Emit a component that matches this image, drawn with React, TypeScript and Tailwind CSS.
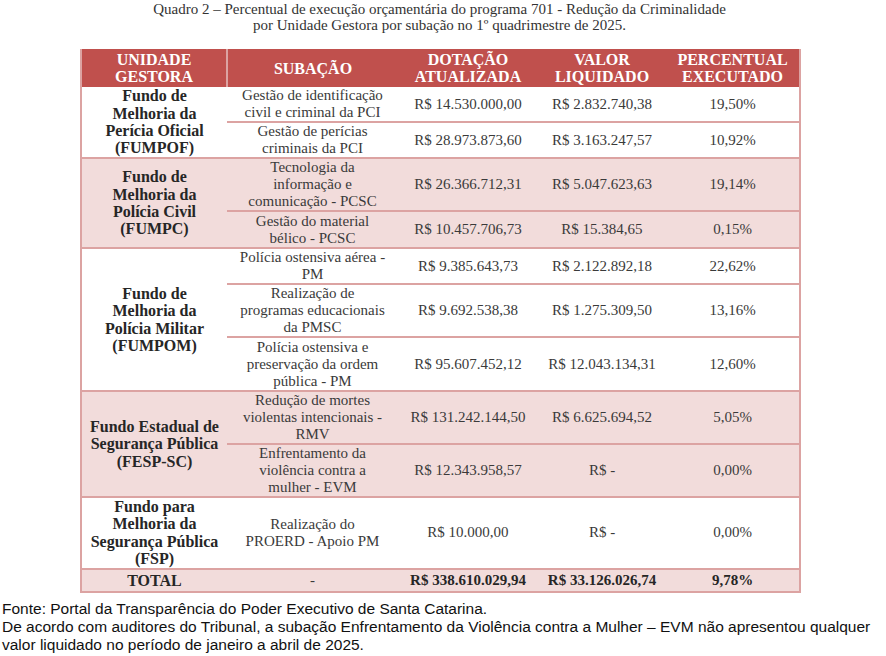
import React from 'react';

type Row = { sub: string[]; dot: string; liq: string; pct: string; h: string };
type Group = { name: string[]; shaded: boolean; rows: Row[] };

const groups: Group[] = [
  {
    name: ['Fundo de', 'Melhoria da', 'Perícia Oficial', '(FUMPOF)'],
    shaded: false,
    rows: [
      { sub: ['Gestão de identificação', 'civil e criminal da PCI'], dot: 'R$ 14.530.000,00', liq: 'R$ 2.832.740,38', pct: '19,50%', h: 'h-[34px]' },
      { sub: ['Gestão de perícias', 'criminais da PCI'], dot: 'R$ 28.973.873,60', liq: 'R$ 3.163.247,57', pct: '10,92%', h: 'h-[36px]' },
    ],
  },
  {
    name: ['Fundo de', 'Melhoria da', 'Polícia Civil', '(FUMPC)'],
    shaded: true,
    rows: [
      { sub: ['Tecnologia da', 'informação e', 'comunicação - PCSC'], dot: 'R$ 26.366.712,31', liq: 'R$ 5.047.623,63', pct: '19,14%', h: 'h-[53px]' },
      { sub: ['Gestão do material', 'bélico - PCSC'], dot: 'R$ 10.457.706,73', liq: 'R$ 15.384,65', pct: '0,15%', h: 'h-[37px]' },
    ],
  },
  {
    name: ['Fundo de', 'Melhoria da', 'Polícia Militar', '(FUMPOM)'],
    shaded: false,
    rows: [
      { sub: ['Polícia ostensiva aérea -', 'PM'], dot: 'R$ 9.385.643,73', liq: 'R$ 2.122.892,18', pct: '22,62%', h: 'h-[35px]' },
      { sub: ['Realização de', 'programas educacionais', 'da PMSC'], dot: 'R$ 9.692.538,38', liq: 'R$ 1.275.309,50', pct: '13,16%', h: 'h-[53px]' },
      { sub: ['Polícia ostensiva e', 'preservação da ordem', 'pública - PM'], dot: 'R$ 95.607.452,12', liq: 'R$ 12.043.134,31', pct: '12,60%', h: 'h-[54px]' },
    ],
  },
  {
    name: ['Fundo Estadual de', 'Segurança Pública', '(FESP-SC)'],
    shaded: true,
    rows: [
      { sub: ['Redução de mortes', 'violentas intencionais -', 'RMV'], dot: 'R$ 131.242.144,50', liq: 'R$ 6.625.694,52', pct: '5,05%', h: 'h-[53px]' },
      { sub: ['Enfrentamento da', 'violência contra a', 'mulher - EVM'], dot: 'R$ 12.343.958,57', liq: 'R$ -', pct: '0,00%', h: 'h-[53px]' },
    ],
  },
  {
    name: ['Fundo para', 'Melhoria da', 'Segurança Pública', '(FSP)'],
    shaded: false,
    rows: [
      { sub: ['Realização do', 'PROERD - Apoio PM'], dot: 'R$ 10.000,00', liq: 'R$ -', pct: '0,00%', h: 'h-[70px]' },
    ],
  },
];

const serif = "font-['Liberation_Serif',serif]";

export default function App() {
  return (
    <div className="w-[886px] h-[656px] bg-white overflow-hidden">
      {/* Title */}
      <div className={`${serif} text-[15px] leading-[16px] text-[#333] text-center w-[719px] ml-[80px] pt-[1px]`}>
        <p>Quadro 2 – Percentual de execução orçamentária do programa 701 - Redução da Criminalidade</p>
        <p>por Unidade Gestora por subação no 1º quadrimestre de 2025.</p>
      </div>

      {/* Table */}
      <table className={`${serif} ml-[80px] mt-[16px] w-[719px] border-collapse table-fixed text-[15px] leading-[17px] text-[#3a3a3a] text-center`}>
        <colgroup>
          <col className="w-[146px]" />
          <col className="w-[171px]" />
          <col className="w-[140px]" />
          <col className="w-[128px]" />
          <col className="w-[134px]" />
        </colgroup>
        <thead>
          <tr className="h-[38px] bg-[#c0504d] text-white text-[16px] leading-[17px]">
            <th className="border-x-2 border-[#dca3a2] font-bold">UNIDADE<br />GESTORA</th>
            <th className="font-bold">SUBAÇÃO</th>
            <th className="font-bold">DOTAÇÃO<br />ATUALIZADA</th>
            <th className="font-bold">VALOR<br />LIQUIDADO</th>
            <th className="border-r-2 border-[#dca3a2] font-bold">PERCENTUAL<br />EXECUTADO</th>
          </tr>
        </thead>
        <tbody>
          {groups.map((g) =>
            g.rows.map((r, i) => (
              <tr key={g.name[0] + g.name[2] + i} className={`${r.h} ${g.shaded ? 'bg-[#f2dcdb]' : 'bg-white'} border-b-2 border-[#dca3a2]`}>
                {i === 0 && (
                  <td rowSpan={g.rows.length} className="p-0 border-l-2 border-b-2 border-[#dca3a2] font-bold text-[16px] leading-[17.4px] text-[#262626] align-middle">
                    {g.name.map((l) => (
                      <div key={l}>{l}</div>
                    ))}
                  </td>
                )}
                <td className="align-middle">
                  {r.sub.map((l) => (
                    <div key={l}>{l}</div>
                  ))}
                </td>
                <td className="align-middle">{r.dot}</td>
                <td className="align-middle">{r.liq}</td>
                <td className="align-middle border-r-2 border-[#dca3a2]">{r.pct}</td>
              </tr>
            ))
          )}
          <tr className="h-[23px] bg-[#f2dcdb] border-b-2 border-[#dca3a2]">
            <td className="border-l-2 border-[#dca3a2] font-bold text-[16px] text-[#262626]">TOTAL</td>
            <td>-</td>
            <td className="font-bold text-[#262626]">R$ 338.610.029,94</td>
            <td className="font-bold text-[#262626]">R$ 33.126.026,74</td>
            <td className="font-bold text-[#262626] border-r-2 border-[#dca3a2]">9,78%</td>
          </tr>
        </tbody>
      </table>

      {/* Notes */}
      <div className="font-['Liberation_Sans',sans-serif] text-[15.5px] leading-[18px] text-[#111] pl-[2px] mt-[7px]">
        <p>Fonte: Portal da Transparência do Poder Executivo de Santa Catarina.</p>
        <p>De acordo com auditores do Tribunal, a subação Enfrentamento da Violência contra a Mulher – EVM não apresentou qualquer valor liquidado no período de janeiro a abril de 2025.</p>
      </div>
    </div>
  );
}
